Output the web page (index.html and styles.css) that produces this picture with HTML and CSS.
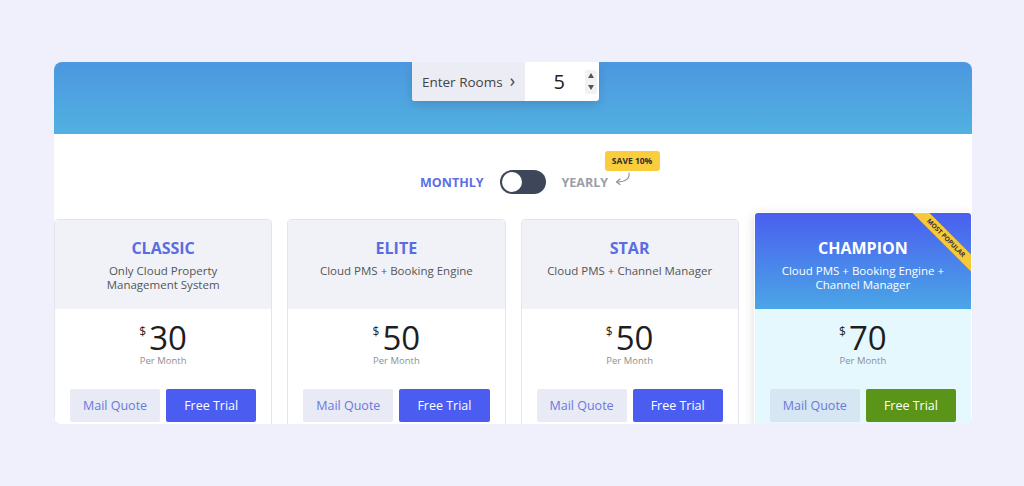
FILE: index.html
```html
<!DOCTYPE html>
<html lang="en">
<head>
    <meta charset="UTF-8">
    <meta name="viewport" content="width=device-width, initial-scale=1.0">
    <title>Pricing Plans</title>
    <link rel="stylesheet" href="styles.css">
</head>
<body>
    <div class="panel">
        <div class="band">
            <div class="rooms">
                <div class="rooms-label">Enter Rooms <span class="chev">&#8250;</span></div>
                <div class="rooms-value">
                    <span>5</span>
                    <div class="spin">
                        <svg width="6" height="5" viewBox="0 0 6 5"><path d="M3 0 L6 5 L0 5 Z" fill="#555"/></svg>
                        <svg width="6" height="5" viewBox="0 0 6 5"><path d="M0 0 L6 0 L3 5 Z" fill="#555"/></svg>
                    </div>
                </div>
            </div>
        </div>

        <div class="billing">
            <span class="period active">MONTHLY</span>
            <div class="switch"><div class="knob"></div></div>
            <div class="yearly">
                <span class="period">YEARLY</span>
                <svg class="curl" width="18" height="14" viewBox="0 0 18 14">
                    <path d="M15 1 C16 6 12 10 3 10" fill="none" stroke="#8a8e98" stroke-width="1.1" stroke-linecap="round"/>
                    <path d="M6 7 L2.5 10 L6 12.5" fill="none" stroke="#8a8e98" stroke-width="1.1" stroke-linecap="round" stroke-linejoin="round"/>
                </svg>
                <span class="save">SAVE 10%</span>
            </div>
        </div>

        <div class="plans">
            <div class="plan">
                <div class="plan-head">
                    <div class="plan-name">CLASSIC</div>
                    <div class="plan-desc">Only Cloud Property<br>Management System</div>
                </div>
                <div class="plan-body">
                    <div class="price"><sup>$</sup>30</div>
                    <div class="per">Per Month</div>
                    <div class="actions">
                        <button class="btn quote">Mail Quote</button>
                        <button class="btn trial">Free Trial</button>
                    </div>
                </div>
            </div>

            <div class="plan">
                <div class="plan-head">
                    <div class="plan-name">ELITE</div>
                    <div class="plan-desc">Cloud PMS + Booking Engine</div>
                </div>
                <div class="plan-body">
                    <div class="price"><sup>$</sup>50</div>
                    <div class="per">Per Month</div>
                    <div class="actions">
                        <button class="btn quote">Mail Quote</button>
                        <button class="btn trial">Free Trial</button>
                    </div>
                </div>
            </div>

            <div class="plan">
                <div class="plan-head">
                    <div class="plan-name">STAR</div>
                    <div class="plan-desc">Cloud PMS + Channel Manager</div>
                </div>
                <div class="plan-body">
                    <div class="price"><sup>$</sup>50</div>
                    <div class="per">Per Month</div>
                    <div class="actions">
                        <button class="btn quote">Mail Quote</button>
                        <button class="btn trial">Free Trial</button>
                    </div>
                </div>
            </div>

            <div class="plan featured">
                <div class="ribbon-wrap"><div class="ribbon">MOST POPULAR</div></div>
                <div class="plan-head">
                    <div class="plan-name">CHAMPION</div>
                    <div class="plan-desc">Cloud PMS + Booking Engine +<br>Channel Manager</div>
                </div>
                <div class="plan-body">
                    <div class="price"><sup>$</sup>70</div>
                    <div class="per">Per Month</div>
                    <div class="actions">
                        <button class="btn quote">Mail Quote</button>
                        <button class="btn trial">Free Trial</button>
                    </div>
                </div>
            </div>
        </div>
    </div>
</body>
</html>
```

FILE: styles.css
```css
body {
    margin: 0;
    padding: 62px 0 0 54px;
    background-color: #eff0fc;
    font-family: "Open Sans", "Liberation Sans", sans-serif;
    color: #333;
}
.panel {
    width: 918px;
    height: 362px;
    background-color: #fff;
    border-radius: 8px;
    overflow: hidden;
}

/* top band with rooms input */
.band {
    height: 72px;
    background: linear-gradient(180deg, #4c97df 0%, #51b1e1 100%);
    padding-left: 358px;
}
.rooms {
    display: flex;
    width: 187px;
    height: 39px;
    background-color: #fff;
    border-radius: 0 0 3px 3px;
    box-shadow: 0 4px 10px rgba(0, 0, 0, 0.12);
    overflow: hidden;
}
.rooms-label {
    width: 113px;
    background-color: #ebecf4;
    font-size: 13.5px;
    color: #444;
    display: flex;
    align-items: center;
    justify-content: center;
    gap: 7px;
}
.chev {
    font-size: 18px;
    line-height: 1;
    margin-top: -3px;
}
.rooms-value {
    flex: 1;
    display: flex;
    align-items: center;
    justify-content: flex-end;
    padding-right: 2px;
    gap: 20px;
    font-size: 20px;
    color: #222;
}
.spin {
    display: flex;
    flex-direction: column;
    justify-content: space-around;
    align-items: center;
    width: 12px;
    height: 24px;
    background-color: #f2f2f4;
    border-radius: 2px;
}

/* monthly / yearly switch */
.billing {
    display: flex;
    align-items: center;
    height: 24px;
    margin-top: 36px;
    padding-left: 366px;
}
.period {
    font-size: 12.5px;
    font-weight: 700;
    color: #9b9ea8;
}
.period.active {
    color: #5b6fe6;
}
.switch {
    width: 46px;
    height: 24px;
    margin: 0 16px;
    border-radius: 12px;
    background-color: #3e4659;
    box-sizing: border-box;
    padding: 2px;
}
.knob {
    width: 20px;
    height: 20px;
    border-radius: 50%;
    background-color: #fff;
}
.yearly {
    position: relative;
    display: flex;
    align-items: center;
    gap: 6px;
}
.curl {
    margin-top: -6px;
}
.save {
    position: absolute;
    left: 43px;
    top: -23px;
    width: 55px;
    height: 20px;
    line-height: 20px;
    text-align: center;
    background-color: #f9cd3d;
    border-radius: 3px;
    font-size: 8.5px;
    font-weight: 700;
    color: #2e2e2e;
}

/* plan cards */
.plans {
    display: grid;
    grid-template-columns: repeat(4, 1fr);
    column-gap: 15px;
    margin-top: 25px;
    align-items: start;
}
.plan {
    position: relative;
    border: 1px solid #e3e5ee;
    border-radius: 4px;
    overflow: hidden;
    text-align: center;
}
.plan-head {
    height: 89px;
    box-sizing: border-box;
    padding-top: 17px;
    background-color: #f0f2f8;
}
.plan-name {
    font-size: 16px;
    line-height: 22px;
    font-weight: 700;
    color: #5a6de0;
}
.plan-desc {
    margin-top: 5px;
    font-size: 11.5px;
    line-height: 13.5px;
    color: #555;
}
.plan-body {
    padding: 12px 15px 12px;
    background-color: #fff;
}
.price {
    font-size: 33px;
    line-height: 34px;
    color: #1e1e1e;
}
.price sup {
    font-size: 12px;
    vertical-align: top;
    line-height: 22px;
    margin-right: 3px;
}
.per {
    font-size: 9.5px;
    line-height: 12px;
    color: #8f8f8f;
}
.actions {
    display: flex;
    gap: 6px;
    margin-top: 22px;
}
.btn {
    flex: 1;
    height: 33px;
    border: none;
    border-radius: 2px;
    font-family: inherit;
    font-size: 12.5px;
    cursor: pointer;
}
.quote {
    background-color: #e8eaf5;
    color: #6a78df;
}
.trial {
    background-color: #4a5df0;
    color: #fff;
}

/* featured card */
.featured {
    margin-top: -7px;
    border-color: transparent;
    box-shadow: 0 3px 12px rgba(0, 0, 0, 0.14);
}
.featured .plan-head {
    height: 96px;
    padding-top: 24px;
    background: linear-gradient(180deg, #4a5ff0 0%, #4aa6e6 100%);
}
.featured .plan-name,
.featured .plan-desc {
    color: #fff;
}
.featured .plan-body {
    background-color: #e4f8fd;
}
.featured .quote {
    background-color: #d6e6f2;
}
.featured .trial {
    background-color: #5a9418;
}
.ribbon-wrap {
    position: absolute;
    top: 0;
    right: 0;
    width: 64px;
    height: 64px;
    overflow: hidden;
}
.ribbon {
    position: absolute;
    left: -11px;
    top: 19px;
    width: 100px;
    height: 12px;
    line-height: 12px;
    transform: rotate(45deg);
    background-color: #f6c83a;
    font-size: 6.5px;
    font-weight: 700;
    color: #333;
}
```
